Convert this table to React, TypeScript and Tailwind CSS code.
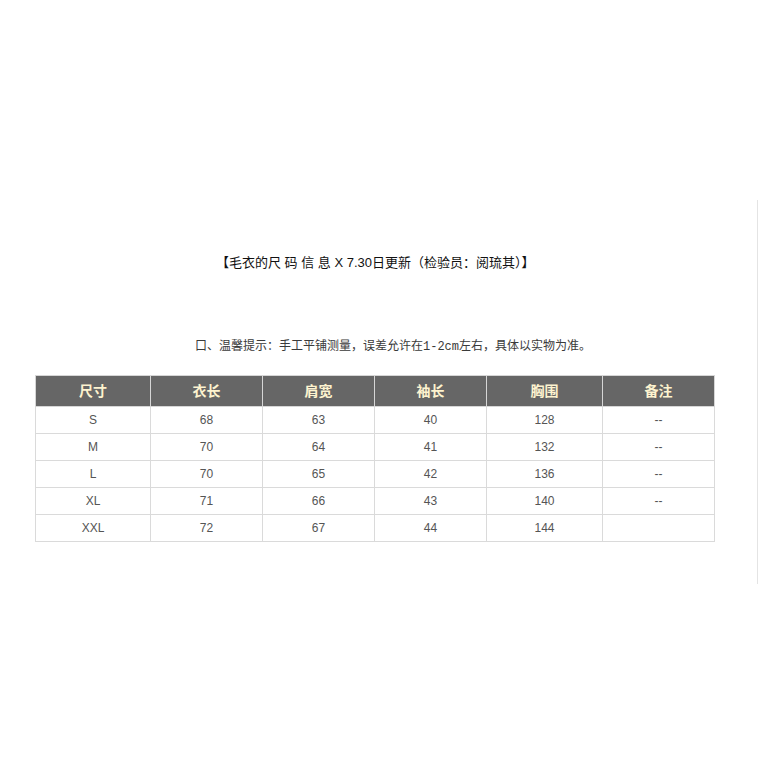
const heads = ["尺寸", "衣长", "肩宽", "袖长", "胸围", "备注"];

const rows = [
  ["S", "68", "63", "40", "128", "--"],
  ["M", "70", "64", "41", "132", "--"],
  ["L", "70", "65", "42", "136", "--"],
  ["XL", "71", "66", "43", "140", "--"],
  ["XXL", "72", "67", "44", "144", ""],
];

const widths = ["w-[115px]", "w-[112px]", "w-[112px]", "w-[112px]", "w-[116px]", "w-[112px]"];

export default function App() {
  return (
    <div className="bg-white w-[759px] h-[759px] overflow-hidden pt-[200px]">
      <div className="w-[758px] h-[384px] border-r border-[#e4e4e4]">
        <div
          className="pt-[53px] pl-[216px] text-[13px] leading-[20px] text-[#111] whitespace-nowrap"
          style={{ fontFamily: '"Liberation Sans", "Noto Sans CJK SC", sans-serif' }}
        >
          【毛衣的尺 码 信 息 X 7.30日更新（检验员：阅琉其）】
        </div>
        <div
          className="mt-[64px] pl-[195px] text-[12px] leading-[20px] text-[#3a3a3a] whitespace-nowrap"
          style={{ fontFamily: '"Liberation Mono", "Noto Sans CJK SC", monospace' }}
        >
          口、温馨提示：手工平铺测量，误差允许在1-2cm左右，具体以实物为准。
        </div>
        <table
          className="mt-[18px] ml-[35px] border-collapse table-fixed w-[679px]"
          style={{ fontFamily: '"Liberation Sans", "Noto Sans CJK SC", sans-serif' }}
        >
          <colgroup>
            {widths.map((w, i) => (
              <col key={i} className={w} />
            ))}
          </colgroup>
          <thead>
            <tr className="h-[31px] bg-[#666666]">
              {heads.map((h) => (
                <th
                  key={h}
                  className="border border-[#d6d6d6] text-[14px] font-bold text-[#fdf3cf] text-center p-0"
                >
                  {h}
                </th>
              ))}
            </tr>
          </thead>
          <tbody>
            {rows.map((r) => (
              <tr key={r[0]} className="h-[27px]">
                {r.map((c, i) => (
                  <td
                    key={i}
                    className="border border-[#dadada] text-[12px] text-[#555] text-center p-0"
                  >
                    {c}
                  </td>
                ))}
              </tr>
            ))}
          </tbody>
        </table>
      </div>
    </div>
  );
}
